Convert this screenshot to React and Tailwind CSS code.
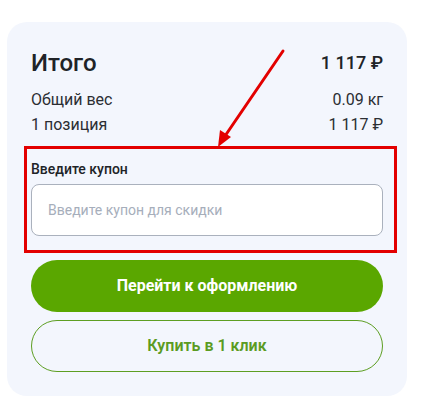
export default function App() {
  return (
    <div className="relative w-[421px] h-[417px] bg-white font-['Roboto',sans-serif]">
      <div className="absolute left-[7px] top-[22px] w-[400px] rounded-[20px] bg-[#f3f6fd] px-[24px] pt-[26px] pb-[24px]">
        <div className="flex h-[29px] items-center justify-between">
          <span className="text-[24px] font-medium text-[#202327]">Итого</span>
          <span className="text-[18px] font-medium text-[#202327]">1 117 ₽</span>
        </div>
        <div className="mt-[10px] flex h-[25px] items-center justify-between text-[16px] text-[#2b2e33]">
          <span>Общий вес</span>
          <span>0.09 кг</span>
        </div>
        <div className="flex h-[25px] items-center justify-between text-[16px] text-[#2b2e33]">
          <span>1 позиция</span>
          <span>1 117 ₽</span>
        </div>

        <div className="relative mt-[22px]">
          <label className="flex h-[20px] items-center text-[14px] font-medium text-[#202327]">
            Введите купон
          </label>
          <input
            type="text"
            placeholder="Введите купон для скидки"
            className="mt-[5px] block h-[52px] w-full rounded-[8px] border border-[#aab1bd] bg-white px-[16px] text-[14px] text-[#202327] outline-none placeholder:text-[#a6aebb]"
          />
          <div className="pointer-events-none absolute -top-[13px] -bottom-[17px] -left-[7px] -right-[14px] border-[3px] border-[#e30000]"></div>
        </div>

        <button className="mt-[24px] flex h-[52px] w-full items-center justify-center rounded-full bg-[#5aa700] text-[16px] font-bold text-white">
          Перейти к оформлению
        </button>
        <button className="mt-[8px] flex h-[52px] w-full items-center justify-center rounded-full border border-[#5d9e22] text-[16px] font-semibold text-[#5b9b22]">
          Купить в 1 клик
        </button>
      </div>

      <svg className="pointer-events-none absolute left-0 top-0" width="421" height="417">
        <line x1="283" y1="51" x2="225" y2="136" stroke="#e30000" strokeWidth="3" strokeLinecap="round" />
        <polygon points="218,147 220,130 231,137" fill="#e30000" />
      </svg>
    </div>
  );
}
